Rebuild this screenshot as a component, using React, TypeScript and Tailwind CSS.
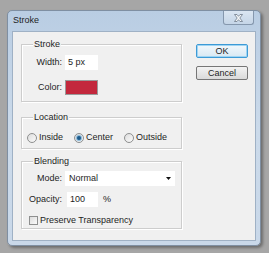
import React from "react";

function Fieldset({ title, className, children }: { title: string; className: string; children: React.ReactNode }) {
  return (
    <div className={`relative w-[161px] border border-[#cdcdcd] shadow-[inset_1px_1px_0_#ffffff,1px_1px_0_#ffffff] ${className}`}>
      <span className="absolute -top-[6px] left-[11px] bg-[#f0f0f0] px-[1px] leading-[11px]">{title}</span>
      {children}
    </div>
  );
}

function Radio({ label, checked }: { label: string; checked?: boolean }) {
  return (
    <div className="flex items-center gap-[2px]">
      <span className="flex h-[10px] w-[10px] items-center justify-center rounded-full border border-[#8e8f8f] bg-gradient-to-br from-[#dcdcdc] to-[#fbfbfb]">
        {checked && <span className="h-[4px] w-[4px] rounded-full bg-[#1c5a8a] shadow-[0_0_1px_1px_#7fb3d8]" />}
      </span>
      <span className="leading-[11px]">{label}</span>
    </div>
  );
}

export default function App() {
  return (
    <div className="h-[253px] w-[269px] bg-[#a6a6a6] pl-[7px] pt-[10px] font-['Liberation_Sans',Arial,sans-serif] text-[9px] text-[#1e1e1e]">
      <div className="flex h-[236px] w-[254px] flex-col rounded-[5px] border border-[#7f8fa2] bg-gradient-to-b from-[#b9cde3] via-[#cbdaea] to-[#c9d8e9] shadow-[2px_2px_3px_rgba(0,0,0,0.35)]">
        {/* title bar */}
        <div className="flex h-[20px] shrink-0 items-start justify-between pl-[5px] pr-[6px]">
          <span className="mt-[4px] leading-[11px]">Stroke</span>
          <div className="flex h-[14px] w-[31px] items-center justify-center rounded-b-[3px] border border-t-0 border-[#8597ad] bg-gradient-to-b from-[#dbe6f2] to-[#c5d5e7]">
            <svg width="9" height="8" viewBox="0 0 9 8">
              <path
                d="M0.5 0.5h2.5l1.5 1.8 1.5-1.8h2.5l-2.7 3.5 2.7 3.5h-2.5l-1.5-1.8-1.5 1.8h-2.5l2.7-3.5z"
                fill="#f4f6f8"
                stroke="#6d7a89"
                strokeWidth="0.8"
              />
            </svg>
          </div>
        </div>

        {/* client area */}
        <div className="mx-[4px] flex h-[210px] border border-[#9fb1c5] bg-[#f0f0f0]">
          <div className="flex flex-col pl-[8px] pt-[12px]">
            <Fieldset title="Stroke" className="h-[58px] pt-[10px]">
              <div className="flex items-center">
                <span className="w-[40px] text-right">Width:</span>
                <div className="ml-[3px] flex h-[15px] w-[33px] items-center bg-white pl-[3px]">5 px</div>
              </div>
              <div className="mt-[10px] flex items-center">
                <span className="w-[40px] text-right">Color:</span>
                <div className="ml-[3px] h-[15px] w-[33px] border border-[#9a9a9a] bg-[#c3283d]" />
              </div>
            </Fieldset>

            <Fieldset title="Location" className="mt-[15px] h-[32px] pl-[5px] pt-[14px]">
              <div className="flex items-center gap-[11px]">
                <Radio label="Inside" />
                <Radio label="Center" checked />
                <Radio label="Outside" />
              </div>
            </Fieldset>

            <Fieldset title="Blending" className="mt-[12px] h-[68px] pt-[9px]">
              <div className="flex items-center">
                <span className="w-[40px] text-right">Mode:</span>
                <div className="ml-[3px] flex h-[15px] w-[110px] items-center justify-between bg-white pl-[4px] pr-[4px]">
                  <span>Normal</span>
                  <svg width="5" height="3" viewBox="0 0 5 3">
                    <path d="M0 0h5L2.5 3z" fill="#111" />
                  </svg>
                </div>
              </div>
              <div className="mt-[6px] flex items-center">
                <span className="w-[40px] text-right">Opacity:</span>
                <div className="ml-[5px] flex h-[15px] w-[31px] items-center bg-white pl-[3px]">100</div>
                <span className="ml-[5px]">%</span>
              </div>
              <div className="mt-[8px] flex h-[11px] items-center pl-[7px]">
                <span className="h-[9px] w-[9px] border border-[#8e8f8f] bg-gradient-to-br from-[#dcdcdc] to-[#fbfbfb]" />
                <span className="ml-[2px]">Preserve Transparency</span>
              </div>
            </Fieldset>
          </div>

          <div className="ml-[14px] flex flex-col gap-[8px] pt-[12px]">
            <button className="flex h-[14px] w-[52px] items-center justify-center rounded-[2px] border border-[#3d9ad6] bg-gradient-to-b from-[#f2f8fc] to-[#d8e8f3] leading-none shadow-[inset_0_0_0_1px_#9ed4f3]">
              OK
            </button>
            <button className="flex h-[14px] w-[52px] items-center justify-center rounded-[2px] border border-[#767676] bg-gradient-to-b from-[#f3f3f3] to-[#dadada] leading-none">
              Cancel
            </button>
          </div>
        </div>
      </div>
    </div>
  );
}
